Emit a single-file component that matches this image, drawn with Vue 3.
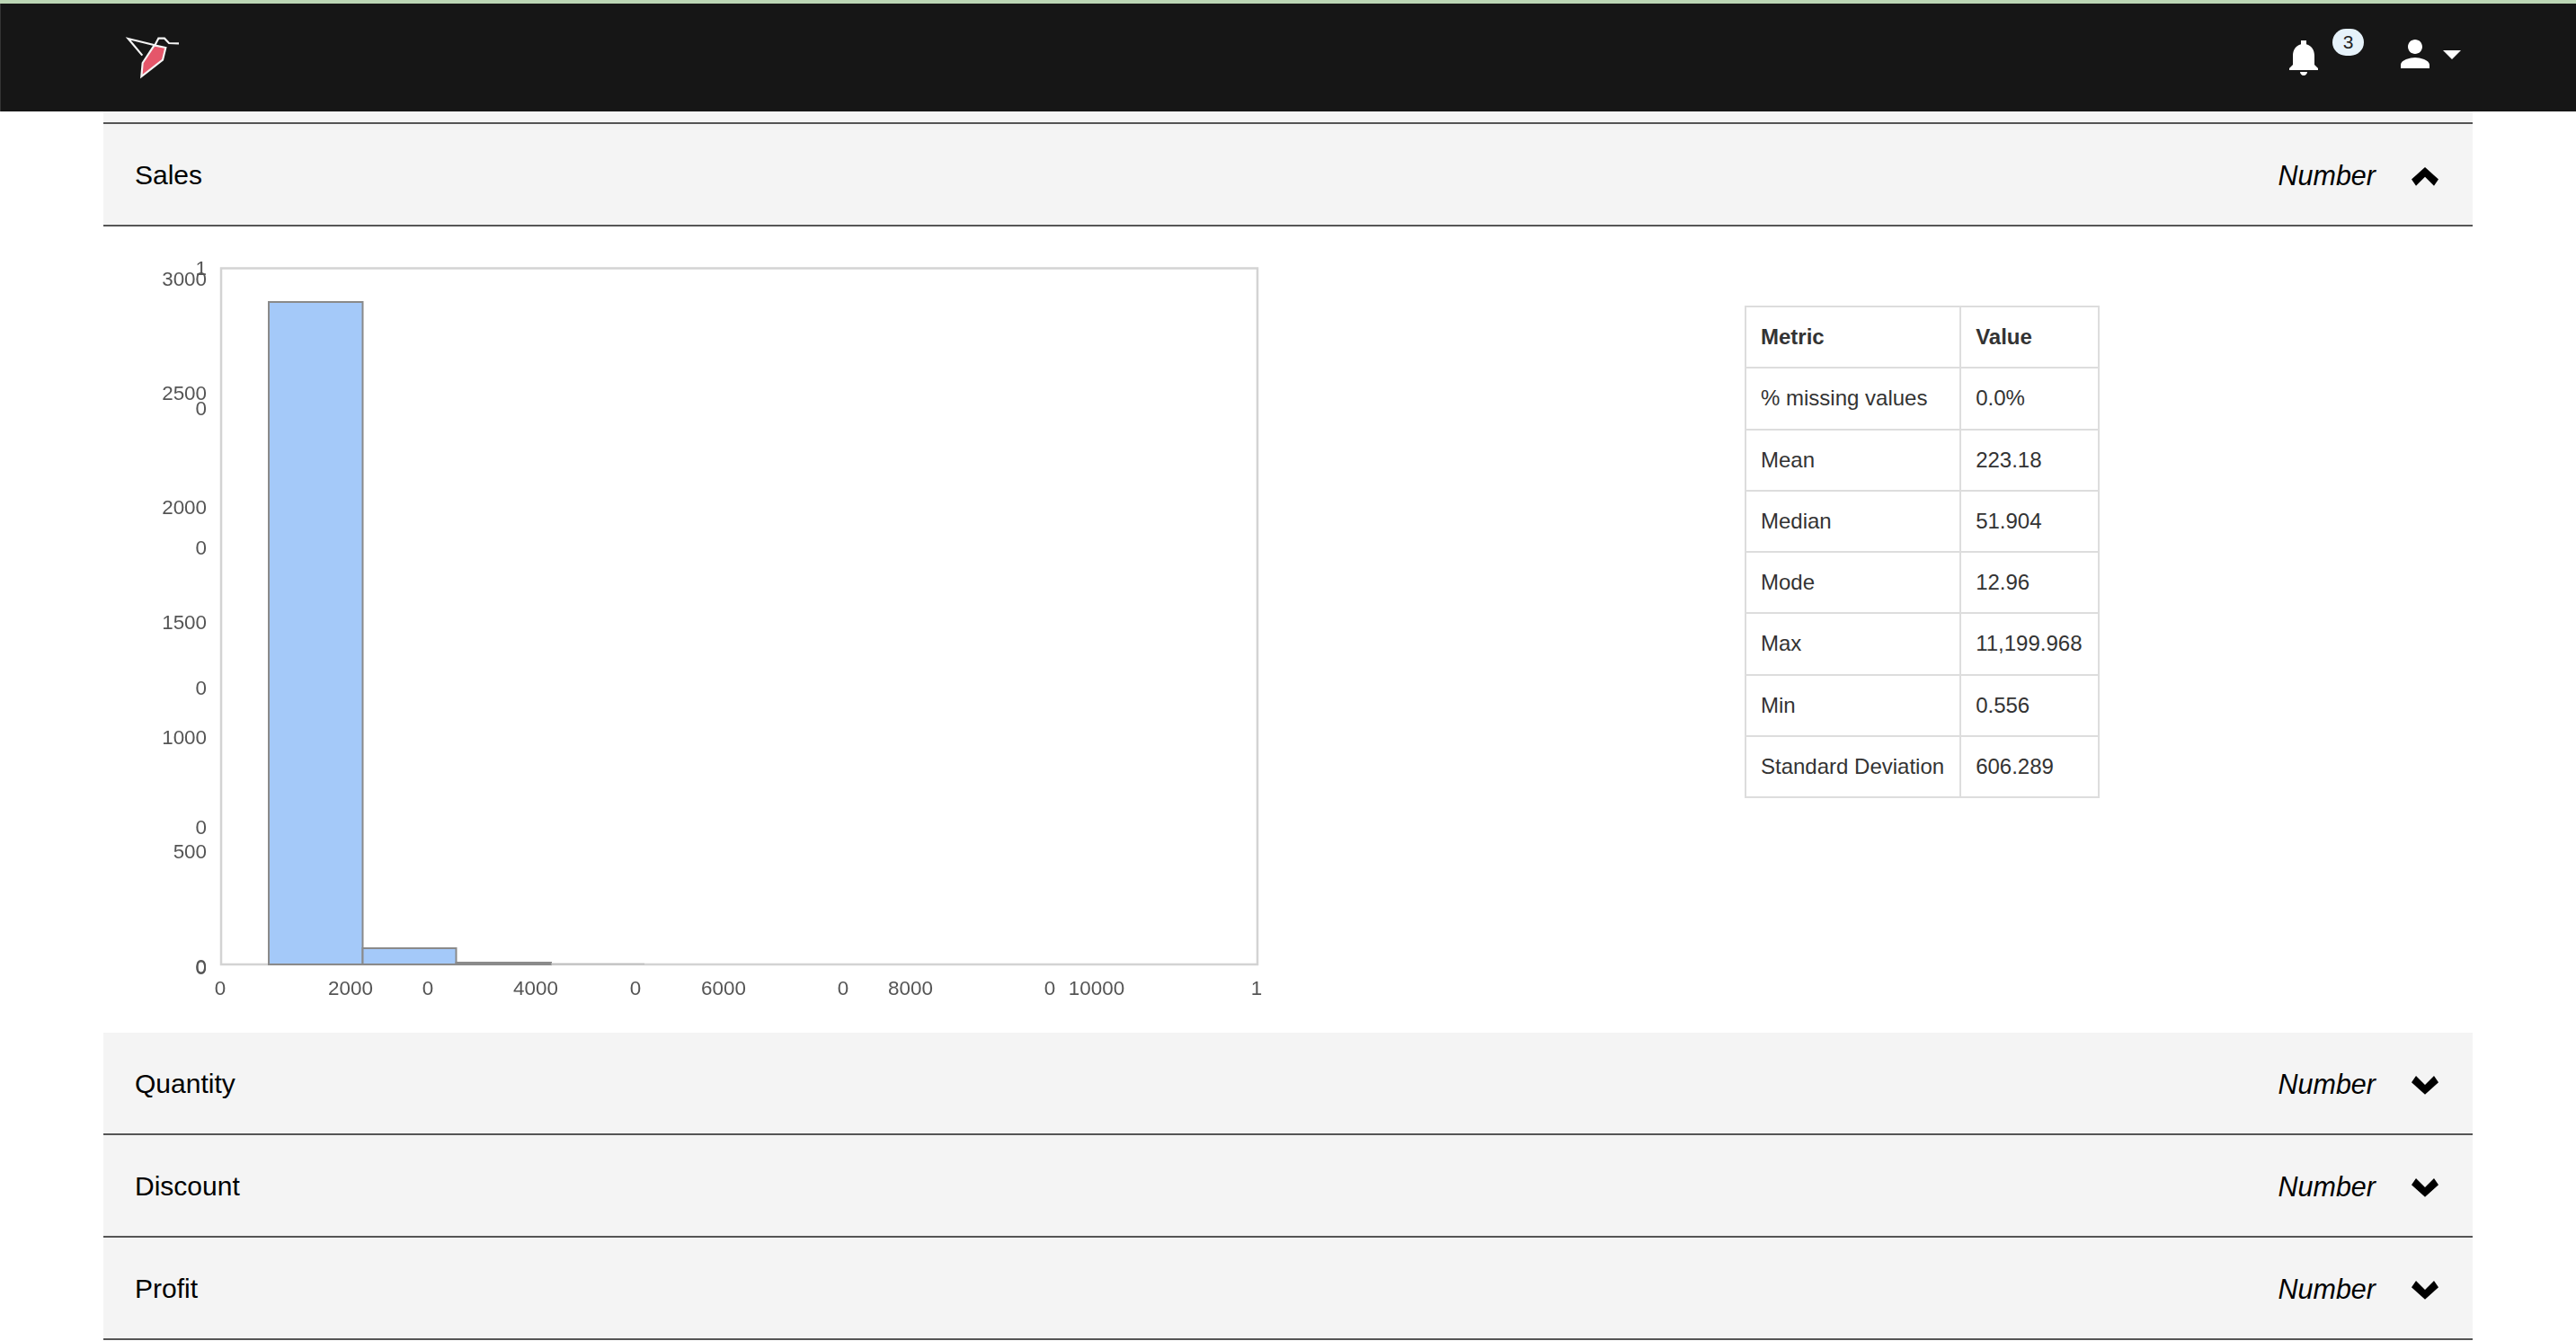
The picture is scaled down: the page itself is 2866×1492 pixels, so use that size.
<script setup>
const yLabels = [
  { t: '3000', y: 310 }, { t: '2500', y: 437 }, { t: '2000', y: 564 }, { t: '1500', y: 692 },
  { t: '1000', y: 820 }, { t: '500', y: 947 }, { t: '0', y: 1075 },
  { t: '1', y: 298 }, { t: '0', y: 454 }, { t: '0', y: 609 }, { t: '0', y: 765 }, { t: '0', y: 920 }, { t: '0', y: 1076 }
]
const xLabels = [
  { t: '0', x: 245 }, { t: '2000', x: 390 }, { t: '0', x: 476 }, { t: '4000', x: 596 }, { t: '0', x: 707 },
  { t: '6000', x: 805 }, { t: '0', x: 938 }, { t: '8000', x: 1013 }, { t: '0', x: 1168 }, { t: '10000', x: 1220 }, { t: '1', x: 1398 }
]
const axisY = 1073
const bars = [
  { x: 299, y: 336, w: 104.5 },
  { x: 403.5, y: 1055, w: 104 },
  { x: 507.5, y: 1071, w: 105.5 }
]
const metrics = [
  ['% missing values', '0.0%'], ['Mean', '223.18'], ['Median', '51.904'], ['Mode', '12.96'],
  ['Max', '11,199.968'], ['Min', '0.556'], ['Standard Deviation', '606.289']
]
const collapsed = ['Quantity', 'Discount', 'Profit']
</script>

<template>
  <div class="page">
    <div class="strip"></div>
    <header class="topbar">
      <svg class="logo" viewBox="0 0 300 240" width="100" height="80">
        <path d="M158 91 L196 99 L186 140 L115 195 L119 150 Z" fill="#e5566a" stroke="#f4f4f4" stroke-width="6.5" stroke-linejoin="miter" />
        <path d="M118 125 L71 69 L160 91 L172 68 L192 68 L207 84 L240 85" fill="none" stroke="#f4f4f4" stroke-width="6.5" />
      </svg>
      <div class="actions">
        <svg class="bell" viewBox="0 0 24 24" width="48" height="48">
          <path fill="#fff" d="M12 22c1.1 0 2-.9 2-2h-4c0 1.1.89 2 2 2zm6-6v-5c0-3.07-1.64-5.64-4.5-6.32V2.5h-3v2.18C7.63 5.36 6 7.92 6 11v5l-2 2v1h16v-1l-2-2z" />
        </svg>
        <span class="badge">3</span>
        <svg class="person" viewBox="0 0 24 24" width="48" height="48">
          <path fill="#fff" d="M12 12c2.21 0 4-1.79 4-4s-1.79-4-4-4-4 1.79-4 4 1.79 4 4 4zm0 2c-2.67 0-8 1.34-8 4v2h16v-2c0-2.66-5.33-4-8-4z" />
        </svg>
        <span class="caret"></span>
      </div>
    </header>

    <main class="content">
      <div class="sliver"></div>
      <div class="row">
        <span class="name">Sales</span>
        <span class="type">Number</span>
        <svg class="chev" viewBox="0 0 30 21" width="30" height="21">
          <path d="M15 0 L30 13.5 L25 20.7 L15 10.7 L5 20.7 L0 13.5 Z" />
        </svg>
      </div>

      <section class="detail">
        <svg class="chart" viewBox="150 252 1270 897" width="1270" height="897">
          <rect x="246" y="298.5" width="1153" :height="axisY - 298.5" fill="#fff" stroke="#d3d3d3" stroke-width="2.5" />
          <rect v-for="(b, i) in bars" :key="i" :x="b.x" :y="b.y" :width="b.w" :height="axisY - b.y" fill="#a4c9f9" stroke="#8a8a8a" stroke-width="2" />
          <line x1="613" :y1="axisY - 0.5" x2="717" :y2="axisY - 0.5" stroke="#bdbdbd" stroke-width="1.5" />
          <text v-for="(l, i) in yLabels" :key="'y' + i" class="tick" x="230" :y="l.y + 8" text-anchor="end">{{ l.t }}</text>
          <text v-for="(l, i) in xLabels" :key="'x' + i" class="tick" :x="l.x" y="1107" text-anchor="middle">{{ l.t }}</text>
        </svg>

        <table class="stats">
          <thead>
            <tr><th>Metric</th><th>Value</th></tr>
          </thead>
          <tbody>
            <tr v-for="m in metrics" :key="m[0]"><td>{{ m[0] }}</td><td>{{ m[1] }}</td></tr>
          </tbody>
        </table>
      </section>

      <div v-for="c in collapsed" :key="c" class="row">
        <span class="name">{{ c }}</span>
        <span class="type">Number</span>
        <svg class="chev" viewBox="0 0 30 21" width="30" height="21">
          <path d="M15 20.7 L30 7.2 L25 0 L15 10 L5 0 L0 7.2 Z" />
        </svg>
      </div>
    </main>
  </div>
</template>

<style scoped>
.page {
  width: 2866px;
  font-family: "Liberation Sans", Arial, sans-serif;
  color: #000;
}
.strip {
  height: 4px;
  background: #bcd6b5;
}
.topbar {
  height: 120px;
  background: #161616;
  border-left: 1px solid #333;
  box-sizing: border-box;
  display: flex;
  align-items: flex-start;
  justify-content: space-between;
  padding: 16px 117px 0 118px;
}
.logo { display: block; }
.actions {
  position: relative;
  width: 210px;
  height: 80px;
}
.bell { position: absolute; left: 0; top: 20px; }
.badge {
  position: absolute;
  left: 56px;
  top: 12px;
  width: 35px;
  height: 30px;
  border-radius: 15px;
  background: #e6f2fa;
  color: #222;
  font-size: 21px;
  line-height: 30px;
  text-align: center;
}
.person { position: absolute; left: 124px; top: 16px; }
.caret {
  position: absolute;
  left: 179px;
  top: 36px;
  width: 0;
  height: 0;
  border-left: 10px solid transparent;
  border-right: 10px solid transparent;
  border-top: 10px solid #fff;
}
.content { padding: 0 115px; }
.sliver {
  height: 12px;
  background: #f4f4f4;
  border-bottom: 2px solid #555;
}
.row {
  height: 112px;
  background: #f4f4f4;
  border-bottom: 2px solid #555;
  display: flex;
  align-items: center;
  padding: 0 38px 0 35px;
}
.name { font-size: 30px; flex: 1; padding-top: 2px; }
.type { font-size: 30.5px; font-style: italic; padding-top: 2px; }
.chev { margin-left: 40px; margin-top: 5px; fill: #000; }
.detail {
  height: 897px;
  display: flex;
  align-items: flex-start;
  padding-left: 35px;
}
.chart { display: block; flex: none; filter: blur(0.45px); }
.tick {
  font-size: 22.4px;
  fill: #555;
  font-family: "Liberation Sans", Arial, sans-serif;
}
.stats {
  margin: 88px 0 0 521px;
  border-collapse: collapse;
  font-size: 24px;
  line-height: 34.28px;
  color: #333;
}
.stats th, .stats td {
  border: 2px solid #ddd;
  padding: 16px;
  text-align: left;
  white-space: nowrap;
}
.stats th:first-child, .stats td:first-child { padding-right: 17px; }
.stats th:last-child, .stats td:last-child { padding-right: 18px; }
.stats th { font-weight: 700; }
</style>

<style>
html, body { margin: 0; overflow: hidden; background: #fff; }
</style>
